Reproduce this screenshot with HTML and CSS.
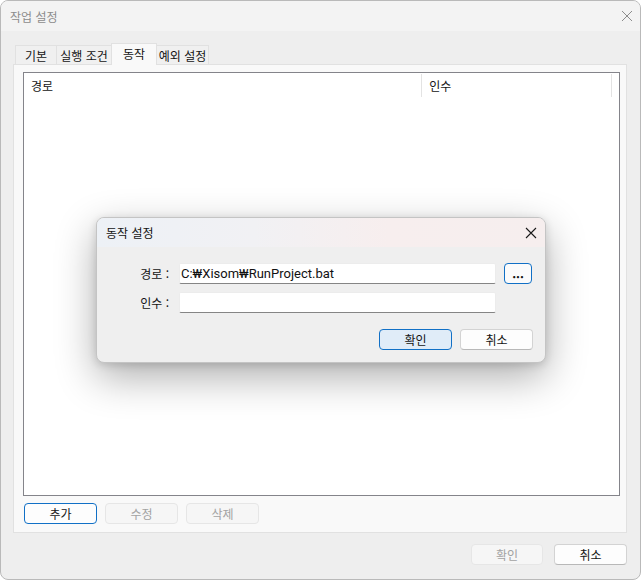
FILE: index.html
```html
<!DOCTYPE html>
<html lang="ko">
<head>
<meta charset="utf-8">
<title>작업 설정</title>
<link rel="stylesheet" href="styles.css">
</head>
<body>
<div class="window">
  <div class="titlebar">
    <span class="title">작업 설정</span>
    <svg class="close" width="12" height="12" viewBox="0 0 12 12"><path d="M1 1 L11 11 M11 1 L1 11" stroke="#8c8c8c" stroke-width="1"/></svg>
  </div>
  <div class="content">
    <div class="tabs">
      <div class="tab tab-basic">기본</div>
      <div class="tab tab-cond">실행 조건</div>
      <div class="tab tab-action active">동작</div>
      <div class="tab tab-except">예외 설정</div>
    </div>
    <div class="panel">
      <div class="list">
        <div class="list-header">
          <div class="col col-path">경로</div>
          <div class="col col-arg">인수</div>
          <div class="col col-rest"></div>
        </div>
      </div>
      <div class="panel-buttons">
        <button class="btn btn-focus">추가</button>
        <button class="btn btn-disabled">수정</button>
        <button class="btn btn-disabled">삭제</button>
      </div>
    </div>
    <div class="footer">
      <button class="btn btn-disabled btn-ok">확인</button>
      <button class="btn btn-normal">취소</button>
    </div>
  </div>

  <div class="modal">
    <div class="modal-titlebar">
      <span class="modal-title">동작 설정</span>
      <svg class="modal-close" width="12" height="12" viewBox="0 0 12 12"><path d="M1 1 L11 11 M11 1 L1 11" stroke="#1a1a1a" stroke-width="1.1"/></svg>
    </div>
    <div class="modal-body">
      <div class="form">
        <label class="form-label">경로 :</label>
        <div class="input">C:₩Xisom₩RunProject.bat</div>
        <button class="btn btn-browse">...</button>
        <label class="form-label">인수 :</label>
        <div class="input"></div>
        <div></div>
      </div>
      <div class="modal-buttons">
        <button class="btn btn-primary">확인</button>
        <button class="btn btn-normal">취소</button>
      </div>
    </div>
  </div>
</div>
</body>
</html>
```

FILE: styles.css
```css
* { box-sizing: border-box; }

html, body {
  margin: 0;
  padding: 0;
  background: #ffffff;
}

body {
  font-family: "Noto Sans CJK KR", "Noto Sans", sans-serif;
  font-size: 12px;
  color: #141414;
}

.window {
  position: relative;
  width: 641px;
  height: 580px;
  border: 1px solid #b9b9b9;
  border-radius: 8px;
  background: #eeeeee;
  overflow: hidden;
}

.titlebar {
  height: 30px;
  background: #f3f3f3;
  display: flex;
  align-items: center;
  justify-content: space-between;
  padding: 0 7px 0 9px;
}

.title {
  color: #8c8c8c;
  font-size: 12px;
}

.close { display: block; }

.content {
  padding: 12px 13px 0 12px;
}

.tabs {
  display: flex;
  align-items: flex-end;
  height: 21px;
  padding-left: 2px;
  position: relative;
  z-index: 2;
}

.tab {
  height: 19px;
  display: flex;
  align-items: center;
  justify-content: center;
  background: #f0f0f0;
  border: 1px solid #e1e1e1;
  border-bottom: none;
  color: #141414;
  font-size: 12px;
}

.tab + .tab { margin-left: -1px; }

.tab-basic { width: 42px; }
.tab-cond { width: 56px; }
.tab-action { width: 46px; }
.tab-except { width: 53px; }

.tab.active {
  height: 22px;
  margin-bottom: -1px;
  background: #f9f9f9;
  padding-bottom: 2px;
}

.panel {
  height: 469px;
  background: #f9f9f9;
  border: 1px solid #e1e1e1;
  padding: 7px 6px 0 9px;
  position: relative;
  z-index: 1;
}

.list {
  height: 424px;
  background: #ffffff;
  border: 1px solid #84848a;
}

.list-header {
  display: flex;
  height: 24px;
  background: #ffffff;
}

.col {
  display: flex;
  align-items: center;
  padding-left: 7px;
  font-size: 12px;
}

.col-path {
  width: 401px;
  border-right: 1px solid #e3e3e3;
  margin-top: 1px;
}

.col-arg {
  width: 191px;
  border-right: 1px solid #e3e3e3;
  margin-top: 1px;
}

.col-rest { flex: 1; }

.panel-buttons {
  display: flex;
  gap: 8px;
  margin-top: 7px;
  padding-left: 1px;
}

.btn {
  font-family: "Noto Sans CJK KR", "Noto Sans", sans-serif;
  font-size: 12px;
  height: 21px;
  width: 73px;
  border-radius: 4px;
  padding: 0;
  display: flex;
  align-items: center;
  justify-content: center;
  color: #141414;
}

.btn-focus {
  background: #fdfdfd;
  border: 1px solid #1170c6;
}

.btn-disabled {
  background: #f6f6f6;
  border: 1px solid #e6e6e6;
  color: #a2a2a2;
}

.btn-normal {
  background: #fdfdfd;
  border: 1px solid #d3d3d3;
  border-bottom-color: #b8b8b8;
}

.btn-primary {
  background: #e0ecf8;
  border: 1px solid #1170c6;
}

.footer {
  display: flex;
  justify-content: flex-end;
  gap: 11px;
  margin-top: 11px;
  padding-right: 0;
}

.btn-ok { width: 72px; }

/* Modal dialog overlay */
.modal {
  position: absolute;
  left: 95px;
  top: 216px;
  width: 450px;
  height: 146px;
  border: 1px solid #c4c4c4;
  border-radius: 8px;
  background: #efefef;
  overflow: hidden;
  box-shadow: 0 14px 40px rgba(0, 0, 0, 0.32), 0 2px 8px rgba(0, 0, 0, 0.14);
  z-index: 10;
}

.modal-titlebar {
  height: 29px;
  display: flex;
  align-items: center;
  justify-content: space-between;
  padding: 0 8px 0 9px;
  background: linear-gradient(90deg, #edf1f6 0%, #f1f1f4 35%, #f7eeee 65%, #f6eeee 100%);
}

.modal-title {
  font-size: 12px;
  color: #141414;
}

.modal-close { display: block; }

.modal-body {
  padding: 16px 12px 0 0;
}

.form {
  display: grid;
  grid-template-columns: 72px 317px 28px;
  column-gap: 10px;
  row-gap: 8px;
  align-items: center;
}

.form .btn-browse { margin-left: -2px; }

.form-label {
  text-align: right;
  font-size: 12px;
  color: #141414;
  padding-right: 0;
}

.input {
  height: 21px;
  background: #ffffff;
  border: 1px solid #ececec;
  border-bottom-color: #858585;
  border-radius: 2px;
  padding-left: 1px;
  display: flex;
  align-items: center;
  font-family: Roboto, "Noto Sans CJK KR", sans-serif;
  font-size: 13px;
  color: #111;
  white-space: nowrap;
}

.btn-browse {
  width: 28px;
  height: 21px;
  background: #fbfbfb;
  border: 1px solid #1170c6;
  font-weight: bold;
  font-size: 12px;
  padding-bottom: 2px;
}

.modal-buttons {
  display: flex;
  justify-content: flex-end;
  gap: 8px;
  margin-top: 16px;
}
```
